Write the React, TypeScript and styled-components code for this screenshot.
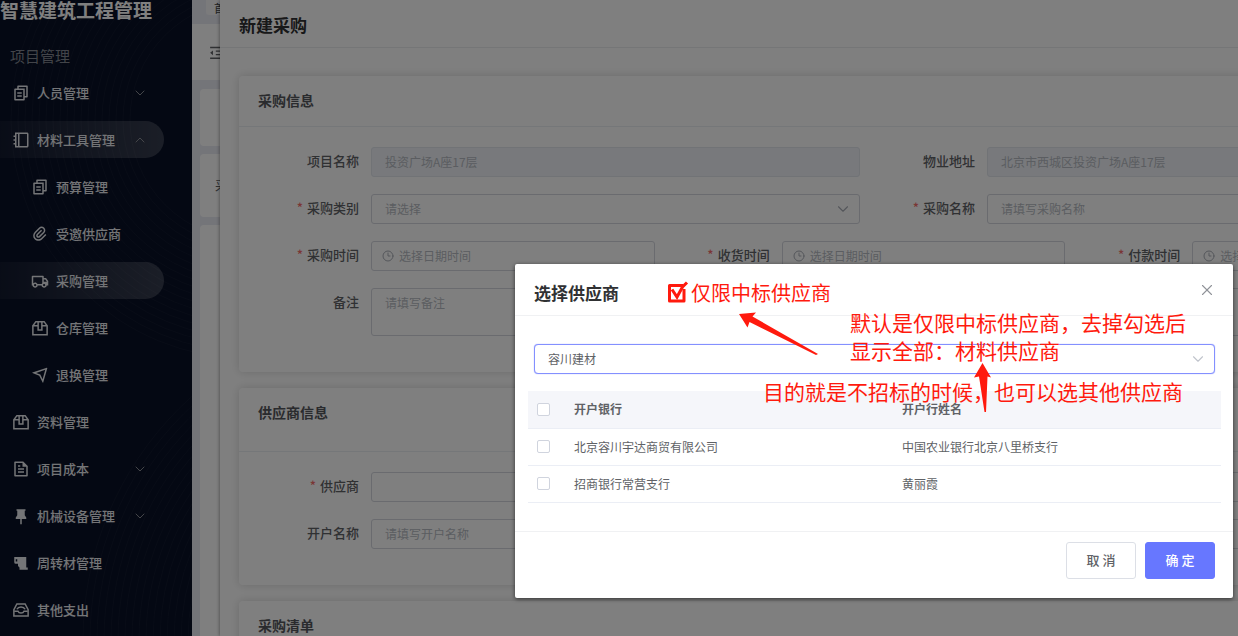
import React, { useId } from 'react';
import styled, { createGlobalStyle, css } from 'styled-components';
import {
  RiFileCopy2Line,
  RiBookletLine,
  RiAttachment2,
  RiTruckLine,
  RiSendPlaneLine,
  RiFileTextLine,
  RiPushpin2Fill,
  RiIndentDecrease,
} from 'react-icons/ri';
import { ChevronDown, ChevronUp, Clock3, X } from 'lucide-react';

const GlobalStyle = createGlobalStyle`
  *, *::before, *::after { box-sizing: border-box; }
  body {
    margin: 0;
    font-family: "Noto Sans CJK SC", sans-serif;
    font-size: 13px;
    color: #606266;
    overflow: hidden;
  }
  button, input, select, textarea { font-family: inherit; }
  h1, h2, h3, p, ul { margin: 0; padding: 0; }
  ul { list-style: none; }
`;

const Shell = styled.div`
  position: relative;
  display: flex;
  height: 100vh;
  overflow: hidden;
  background: #e9eaf3;
`;

/* ---------- sidebar ---------- */

const Sidebar = styled.aside`
  position: relative;
  flex: 0 0 192px;
  background: #081026;
  overflow: hidden;
`;

const Waves = styled.svg`
  position: absolute;
  inset: 0;
  width: 100%;
  height: 100%;
  fill: none;
  stroke: #ffffff;
  stroke-opacity: 0.035;
`;

const SidebarContent = styled.div`
  position: relative;
`;

const Brand = styled.h1`
  height: 45px;
  font-size: 19px;
  line-height: 20px;
  font-weight: 700;
  color: #ffffff;
  white-space: nowrap;
`;

const GroupName = styled.p`
  height: 29px;
  padding-left: 10px;
  font-size: 15px;
  line-height: 22px;
  color: #858992;
`;

const MenuList = styled.ul`
  display: flex;
  flex-direction: column;
  gap: 10px;
`;

const MenuLink = styled.a<{ $active?: boolean; $sub?: boolean }>`
  display: flex;
  align-items: center;
  gap: 7px;
  width: 164px;
  height: 37px;
  padding: 0 16px 0 ${(p) => (p.$sub ? 31 : 12)}px;
  border-radius: 0 19px 19px 0;
  color: #e8eaee;
  text-decoration: none;
  font-weight: 500;
  ${(p) =>
    p.$active &&
    css`
      background: linear-gradient(90deg, rgba(255, 255, 255, 0.04), rgba(255, 255, 255, 0.19));
    `}
  > svg { flex: none; }
`;

const MenuText = styled.span`
  flex: 1;
  line-height: 18px;
  white-space: nowrap;
`;

/* ---------- page behind the drawer ---------- */

const Main = styled.main`
  flex: 1;
  min-width: 0;
`;

const TabStrip = styled.div`
  height: 24px;
  padding-left: 14px;
`;

const Tab = styled.div`
  display: flex;
  align-items: center;
  height: 15px;
  padding: 0 8px;
  background: #f6f6f9;
  border-radius: 0 0 3px 3px;
  color: #404348;
  font-size: 11px;
  line-height: 12px;
  overflow: hidden;
`;

const TopBar = styled.div`
  display: flex;
  align-items: center;
  height: 56px;
  padding-left: 16px;
  background: #ffffff;
`;

const PanelStack = styled.div`
  display: flex;
  flex-direction: column;
  gap: 8px;
  padding: 9px 8px 0;
`;

const Panel = styled.div<{ $height: number }>`
  display: flex;
  align-items: center;
  height: ${(p) => p.$height}px;
  padding: 0 0 3px 15px;
  background: #ffffff;
  border-radius: 4px;
`;

/* ---------- drawer ---------- */

const Drawer = styled.section`
  position: absolute;
  top: 0;
  bottom: 0;
  left: 220px;
  right: 0;
  overflow: hidden;
  background: #ffffff;
  box-shadow: -1px 0 3px rgba(0, 0, 0, 0.3);
`;

const DrawerHeader = styled.header`
  height: 48px;
  padding: 13px 19px 0;
  border-bottom: 1px solid #ebecef;
  font-size: 17px;
  line-height: 24px;
`;

const DrawerTitle = styled.h2`
  font-size: 17px;
  font-weight: 700;
  color: #303133;
`;

const DrawerBody = styled.div`
  display: flex;
  flex-direction: column;
  gap: 16px;
  min-width: 1260px;
  padding: 28px 19px;
`;

const Card = styled.section`
  padding-bottom: 36px;
  border-radius: 4px;
  background: #ffffff;
  box-shadow: 0 0 10px rgba(0, 0, 0, 0.16);
`;

const CardHeader = styled.header<{ $tall?: boolean }>`
  height: ${(p) => (p.$tall ? 64 : 51)}px;
  padding: 13px 19px 0;
  border-bottom: 1px solid #ebeef2;
`;

const CardTitle = styled.h3`
  font-size: 14px;
  line-height: 22px;
  font-weight: 700;
  color: #55575c;
`;

const FormRows = styled.div`
  display: flex;
  flex-direction: column;
  gap: 17px;
  width: 1237px;
  padding: 20px 0 0 5px;
`;

const FormRow = styled.div`
  display: flex;
`;

const Field = styled.div`
  flex: 1 1 0;
  display: flex;
  min-width: 0;
`;

const FieldLabel = styled.label<{ $required?: boolean }>`
  flex: 0 0 127px;
  padding-right: 12px;
  line-height: 28px;
  text-align: right;
  font-weight: 500;
  ${(p) =>
    p.$required &&
    css`
      &::before {
        content: "*";
        margin-right: 4px;
        color: #f56c6c;
      }
    `}
`;

const boxed = css`
  border: 1px solid #d4d7de;
  border-radius: 3px;
  background: #ffffff;
`;

const Control = styled.div<{ $disabled?: boolean; $kind?: 'date' | 'select' }>`
  ${boxed}
  flex: 1;
  display: flex;
  align-items: center;
  gap: 5px;
  min-width: 0;
  height: 30px;
  padding: 0 ${(p) => (p.$kind === 'select' ? 7 : 13)}px 0 ${(p) => (p.$kind === 'date' ? 10 : 13)}px;
  color: #a9adb6;
  ${(p) =>
    p.$disabled &&
    css`
      background: #f0f3f8;
      border-color: #e2e6ed;
    `}
  > svg { flex: none; }
`;

const plain = css`
  flex: 1;
  min-width: 0;
  height: 28px;
  padding: 0 0 2px;
  border: 0;
  outline: 0;
  background: none;
  font-size: 12px;
`;

const TextInput = styled.input`
  ${plain}
  color: #b6bac2;
  &::placeholder { color: #b6bac2; opacity: 1; }
`;

const SelectInput = styled.select<{ $filled?: boolean }>`
  ${plain}
  appearance: none;
  color: ${(p) => (p.$filled ? '#606266' : '#b6bac2')};
`;

const Remark = styled.textarea`
  ${boxed}
  flex: 1;
  height: 48px;
  padding: 5px 13px;
  resize: none;
  font-size: 12px;
  line-height: 18px;
  &::placeholder { color: #b6bac2; opacity: 1; }
`;

/* ---------- dialog ---------- */

const Mask = styled.div`
  position: absolute;
  inset: 0;
  display: flex;
  align-items: flex-start;
  padding: 264px 5px 0 515px;
  background: rgba(0, 0, 0, 0.5);
`;

const Dialog = styled.section`
  position: relative;
  flex: 1;
  min-width: 0;
  background: #ffffff;
  border-radius: 2px;
  box-shadow: 0 1px 4px rgba(0, 0, 0, 0.6);
`;

const DialogHeader = styled.header`
  display: flex;
  align-items: center;
  height: 52px;
  padding: 6px 19px 0;
  border-bottom: 1px solid #f0f1f3;
`;

const DialogTitle = styled.h2`
  margin-right: 46px;
  font-size: 17px;
  font-weight: 700;
  color: #303133;
`;

const CloseButton = styled.button`
  display: flex;
  margin: 0 -2px 5px auto;
  padding: 0;
  border: 0;
  background: none;
  color: #909399;
`;

const OnlyWinners = styled.label`
  display: flex;
  align-items: center;
  gap: 2px;
  font-size: 20px;
  line-height: 28px;
  color: #ff1a0e;
`;

const TickBox = styled.span`
  position: relative;
  width: 24px;
  height: 24px;
`;

const TickInput = styled.input`
  position: absolute;
  inset: 0;
  margin: 0;
  width: 24px;
  height: 24px;
  appearance: none;
`;

const TickMark = styled.svg`
  position: absolute;
  inset: 0;
  pointer-events: none;
`;

const DialogBody = styled.div`
  padding: 28px 12px 28px 13px;
`;

const SupplierSelect = styled(Control)`
  margin: 0 6px 17px;
  border-color: #8490ff;
  border-radius: 4px;
  box-shadow: 0 0 1px #8490ff;
  color: #c0c4cc;
`;

const Table = styled.table`
  width: 100%;
  table-layout: fixed;
  border-collapse: collapse;
  border-bottom: 1px solid #e2e4e9;
  font-size: 12px;
`;

const Row = styled.tr`
  height: 37px;
  border-bottom: 1px solid #ebeef5;
  thead > & { background: #f5f6fa; }
`;

const Cell = styled.td<{ $tick?: boolean }>`
  padding: 0 0 0 ${(p) => (p.$tick ? 9 : 0)}px;
  text-align: left;
  line-height: 20px;
`;

const TickCol = styled.col`
  width: 46px;
`;

const NameCol = styled.col`
  width: 328px;
`;

const RowTick = styled.input`
  display: block;
  width: 13px;
  height: 13px;
  margin: 0;
  appearance: none;
  border: 1px solid #d0d4de;
  border-radius: 2px;
  background: #ffffff;
`;

const DialogFooter = styled.footer`
  display: flex;
  justify-content: flex-end;
  gap: 9px;
  padding: 10px 18px 19px;
  border-top: 1px solid #f0f1f3;
`;

const Button = styled.button<{ $primary?: boolean }>`
  width: 70px;
  height: 37px;
  padding: 0 0 2px;
  border: 1px solid ${(p) => (p.$primary ? '#6777ff' : '#dcdfe6')};
  border-radius: 3px;
  background: ${(p) => (p.$primary ? '#6777ff' : '#ffffff')};
  color: ${(p) => (p.$primary ? '#ffffff' : '#606266')};
  font-size: 13px;
  font-weight: 500;
`;

/* ---------- review notes laid over the dialog ---------- */

const Note = styled.p<{ $x: number; $y: number }>`
  position: absolute;
  left: ${(p) => p.$x}px;
  top: ${(p) => p.$y}px;
  font-size: 21px;
  line-height: 28px;
  color: #ff1a0e;
  white-space: nowrap;
`;

const Arrows = styled.svg`
  position: absolute;
  left: 0;
  top: 0;
  fill: #ff1a0e;
  pointer-events: none;
`;

/* ---------- icons that the icon set lacks ---------- */

const Outline = styled.svg`
  fill: none;
  stroke: currentColor;
  stroke-width: 2;
`;

const BoxIcon = () => (
  <Outline width="18" height="18" viewBox="0 0 24 24">
    <path d="M6.500 3.500h11L21.500 9v12h-19V9z" />
    <path d="M2.500 9h7M14.500 9h7M9.500 4v10.500h5V4" />
  </Outline>
);

const TrayIcon = () => (
  <Outline width="18" height="18" viewBox="0 0 24 24">
    <path d="M6.500 4h11l4 7.500V20h-19v-8.500z" />
    <path d="M3 13.500h5c1 3.500 7 3.500 8 0h5M6.500 11c2-4 9-4 11 0" />
  </Outline>
);

const CupIcon = () => (
  <svg width="18" height="18" viewBox="0 0 24 24" fill="currentColor">
    <path fillRule="evenodd" d="M3 4h16v14h2v3H10v-3l-2-2v-3H5a2 2 0 0 1-2-2zm2 3v3h2V7z" />
  </svg>
);

type MenuEntry = {
  text: string;
  icon: React.ReactNode;
  sub?: boolean;
  active?: boolean;
  arrow?: 'up' | 'down';
};

const menu: MenuEntry[] = [
  { text: '人员管理', icon: <RiFileCopy2Line size={18} />, arrow: 'down' },
  { text: '材料工具管理', icon: <RiBookletLine size={18} />, arrow: 'up', active: true },
  { text: '预算管理', icon: <RiFileCopy2Line size={18} />, sub: true },
  { text: '受邀供应商', icon: <RiAttachment2 size={18} />, sub: true },
  { text: '采购管理', icon: <RiTruckLine size={18} />, sub: true, active: true },
  { text: '仓库管理', icon: <BoxIcon />, sub: true },
  { text: '退换管理', icon: <RiSendPlaneLine size={18} />, sub: true },
  { text: '资料管理', icon: <BoxIcon /> },
  { text: '项目成本', icon: <RiFileTextLine size={18} />, arrow: 'down' },
  { text: '机械设备管理', icon: <RiPushpin2Fill size={18} />, arrow: 'down' },
  { text: '周转材管理', icon: <CupIcon /> },
  { text: '其他支出', icon: <TrayIcon /> },
];

const upperRings = Array.from({ length: 18 }, (_, i) => 120 + i * 7);
const lowerRings = Array.from({ length: 22 }, (_, i) => 180 + i * 7);

type FieldProps = {
  label: string;
  required?: boolean;
  kind?: 'text' | 'select' | 'date' | 'area';
  placeholder?: string;
  value?: string;
};

function FormField({ label, required, kind = 'text', placeholder, value }: FieldProps) {
  const id = useId();
  return (
    <Field>
      <FieldLabel htmlFor={id} $required={required}>{label}</FieldLabel>
      {kind === 'area' && <Remark id={id} placeholder={placeholder} />}
      {kind === 'select' && (
        <Control $kind="select">
          <SelectInput id={id}>
            <option>{placeholder}</option>
          </SelectInput>
          <ChevronDown size={18} strokeWidth={1.5} />
        </Control>
      )}
      {(kind === 'text' || kind === 'date') && (
        <Control $disabled={value !== undefined} $kind={kind === 'date' ? 'date' : undefined}>
          {kind === 'date' && <Clock3 size={12} />}
          <TextInput id={id} placeholder={placeholder} defaultValue={value} disabled={value !== undefined} />
        </Control>
      )}
    </Field>
  );
}

const banks = [
  ['北京容川宇达商贸有限公司', '中国农业银行北京八里桥支行'],
  ['招商银行常营支行', '黄丽霞'],
];

export default function App() {
  return (
    <>
      <GlobalStyle />
      <Shell>
        <Sidebar>
          <Waves aria-hidden="true">
            {upperRings.map((r) => <circle key={r} cx="250" cy="120" r={r} />)}
            {lowerRings.map((r) => <circle key={r} cx="410" cy="640" r={r} />)}
          </Waves>
          <SidebarContent>
            <Brand>智慧建筑工程管理</Brand>
            <GroupName>项目管理</GroupName>
            <nav>
              <MenuList>
                {menu.map((m) => (
                  <li key={m.text}>
                    <MenuLink href="#" $sub={m.sub} $active={m.active}>
                      {m.icon}
                      <MenuText>{m.text}</MenuText>
                      {m.arrow === 'down' && <ChevronDown size={16} strokeWidth={1.5} color="#8a8d94" />}
                      {m.arrow === 'up' && <ChevronUp size={16} strokeWidth={1.5} color="#8a8d94" />}
                    </MenuLink>
                  </li>
                ))}
              </MenuList>
            </nav>
          </SidebarContent>
        </Sidebar>

        <Main>
          <TabStrip><Tab>首页</Tab></TabStrip>
          <TopBar><RiIndentDecrease size={17} /></TopBar>
          <PanelStack>
            <Panel $height={57} />
            <Panel $height={63}>采购</Panel>
            <Panel $height={420} />
          </PanelStack>
        </Main>

        <Drawer>
          <DrawerHeader><DrawerTitle>新建采购</DrawerTitle></DrawerHeader>
          <DrawerBody>
            <Card>
              <CardHeader><CardTitle>采购信息</CardTitle></CardHeader>
              <FormRows>
                <FormRow>
                  <FormField label="项目名称" value="投资广场A座17层" />
                  <FormField label="物业地址" value="北京市西城区投资广场A座17层" />
                </FormRow>
                <FormRow>
                  <FormField label="采购类别" required kind="select" placeholder="请选择" />
                  <FormField label="采购名称" required placeholder="请填写采购名称" />
                </FormRow>
                <FormRow>
                  <FormField label="采购时间" required kind="date" placeholder="选择日期时间" />
                  <FormField label="收货时间" required kind="date" placeholder="选择日期时间" />
                  <FormField label="付款时间" required kind="date" placeholder="选择日期时间" />
                </FormRow>
                <FormRow>
                  <FormField label="备注" kind="area" placeholder="请填写备注" />
                </FormRow>
              </FormRows>
            </Card>
            <Card>
              <CardHeader $tall><CardTitle>供应商信息</CardTitle></CardHeader>
              <FormRows>
                <FormRow><FormField label="供应商" required /></FormRow>
                <FormRow><FormField label="开户名称" placeholder="请填写开户名称" /></FormRow>
              </FormRows>
            </Card>
            <Card>
              <CardHeader><CardTitle>采购清单</CardTitle></CardHeader>
            </Card>
          </DrawerBody>
        </Drawer>

        <Mask>
          <Dialog role="dialog" aria-labelledby="dialog-title">
            <DialogHeader>
              <DialogTitle id="dialog-title">选择供应商</DialogTitle>
              <OnlyWinners>
                <TickBox>
                  <TickInput type="checkbox" defaultChecked />
                  <TickMark width="24" height="24" viewBox="0 0 24 24" fill="none" stroke="#ff1a0e" strokeWidth="3">
                    <path d="M18 4.500H4.500V20H19V8" strokeLinejoin="round" />
                    <path d="M7 8.500l5 7.500L17.500 6l4.500-4.500" />
                  </TickMark>
                </TickBox>
                仅限中标供应商
              </OnlyWinners>
              <CloseButton type="button" aria-label="关闭"><X size={18} strokeWidth={1.5} /></CloseButton>
            </DialogHeader>
            <DialogBody>
              <SupplierSelect $kind="select">
                <SelectInput $filled aria-label="选择供应商">
                  <option>容川建材</option>
                </SelectInput>
                <ChevronDown size={18} strokeWidth={1.5} />
              </SupplierSelect>
              <Table>
                <colgroup><TickCol /><NameCol /><col /></colgroup>
                <thead>
                  <Row>
                    <Cell as="th" $tick><RowTick type="checkbox" aria-label="全选" /></Cell>
                    <Cell as="th">开户银行</Cell>
                    <Cell as="th">开户行姓名</Cell>
                  </Row>
                </thead>
                <tbody>
                  {banks.map(([bank, owner]) => (
                    <Row key={bank}>
                      <Cell $tick><RowTick type="checkbox" aria-label={bank} /></Cell>
                      <Cell>{bank}</Cell>
                      <Cell>{owner}</Cell>
                    </Row>
                  ))}
                </tbody>
              </Table>
            </DialogBody>
            <DialogFooter>
              <Button type="button">取 消</Button>
              <Button type="button" $primary>确 定</Button>
            </DialogFooter>
            <Note $x={335} $y={44}>
              默认是仅限中标供应商，去掉勾选后<br />显示全部：材料供应商
            </Note>
            <Note $x={248} $y={113}>目的就是不招标的时候，也可以选其他供应商</Note>
            <Arrows width="500" height="160" aria-hidden="true">
              <path d="M224 50L241 48.500L237.500 52.500L303 90L301 91L234.500 58L232.500 63.500z" />
              <path d="M467.500 99L476 113.500L472.500 112.500L471 148H469.500L464 112.500L459 113.500z" />
            </Arrows>
          </Dialog>
        </Mask>
      </Shell>
    </>
  );
}
